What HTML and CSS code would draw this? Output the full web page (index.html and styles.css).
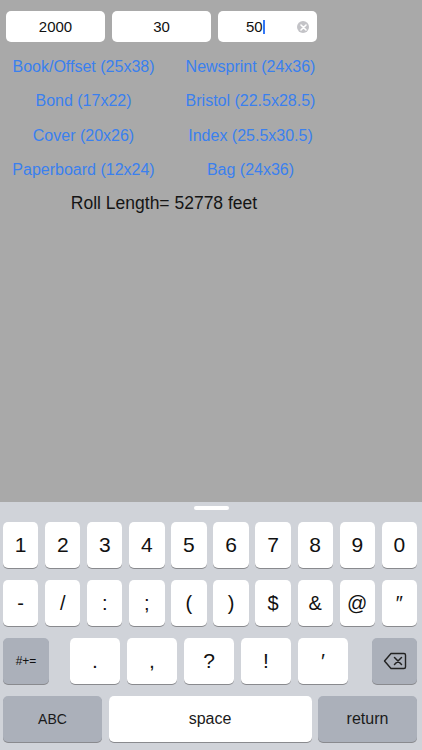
FILE: index.html
```html
<!DOCTYPE html>
<html lang="en">
<head>
    <meta charset="UTF-8">
    <meta name="viewport" content="width=device-width, initial-scale=1.0">
    <title>Roll Length</title>
    <link rel="stylesheet" href="styles.css">
</head>
<body>
    <div class="screen">
        <div class="inputs">
            <div class="field">2000</div>
            <div class="field">30</div>
            <div class="field active">
                <span class="value">50<span class="cursor"></span></span>
                <span class="clear">
                    <svg width="7" height="7" viewBox="0 0 7 7"><path d="M1 1L6 6M6 1L1 6" stroke="#fff" stroke-width="1.6" stroke-linecap="round"/></svg>
                </span>
            </div>
        </div>

        <div class="grades">
            <a class="grade">Book/Offset (25x38)</a>
            <a class="grade">Newsprint (24x36)</a>
            <a class="grade">Bond (17x22)</a>
            <a class="grade">Bristol (22.5x28.5)</a>
            <a class="grade">Cover (20x26)</a>
            <a class="grade">Index (25.5x30.5)</a>
            <a class="grade">Paperboard (12x24)</a>
            <a class="grade">Bag (24x36)</a>
        </div>

        <p class="result">Roll Length= 52778 feet</p>

        <div class="keyboard">
            <div class="handle"></div>
            <div class="row">
                <span class="key">1</span><span class="key">2</span><span class="key">3</span><span class="key">4</span><span class="key">5</span>
                <span class="key">6</span><span class="key">7</span><span class="key">8</span><span class="key">9</span><span class="key">0</span>
            </div>
            <div class="row sym">
                <span class="key">-</span><span class="key">/</span><span class="key">:</span><span class="key">;</span><span class="key">(</span>
                <span class="key">)</span><span class="key">$</span><span class="key">&amp;</span><span class="key">@</span><span class="key">″</span>
            </div>
            <div class="row third">
                <span class="key dark small">#+=</span>
                <div class="punct">
                    <span class="key">.</span><span class="key">,</span><span class="key">?</span><span class="key">!</span><span class="key">′</span>
                </div>
                <span class="key dark del">
                    <svg width="24" height="18" viewBox="0 0 24 18"><path d="M8 1.5H21a1.5 1.5 0 0 1 1.5 1.5V15a1.5 1.5 0 0 1-1.5 1.5H8L1.5 9Z" fill="none" stroke="#222" stroke-width="1.4" stroke-linejoin="round"/><path d="M11.5 5.5l7 7M18.5 5.5l-7 7" stroke="#222" stroke-width="1.5" stroke-linecap="round"/></svg>
                </span>
            </div>
            <div class="row bottom">
                <span class="key dark word abc">ABC</span>
                <span class="key word space">space</span>
                <span class="key dark word ret">return</span>
            </div>
        </div>
    </div>
</body>
</html>
```

FILE: styles.css
```css
body {
    margin: 0;
    font-family: "Liberation Sans", Arial, sans-serif;
    background-color: #a9a9a9;
}
.screen {
    height: 750px;
    display: flex;
    flex-direction: column;
}
.inputs {
    display: flex;
    gap: 7px;
    padding: 11px 0 0 6px;
}
.field {
    width: 99px;
    height: 31px;
    background-color: #fff;
    border-radius: 5px;
    font-size: 15px;
    color: #111;
    display: flex;
    align-items: center;
    justify-content: center;
    position: relative;
}
.field.active {
    justify-content: flex-start;
}
.field.active .value {
    margin-left: 28px;
    display: flex;
    align-items: center;
}
.cursor {
    width: 2px;
    height: 14px;
    background-color: #3478f6;
}
.clear {
    position: absolute;
    right: 8px;
    top: 10px;
    width: 12px;
    height: 12px;
    border-radius: 50%;
    background-color: #c3c3c7;
    display: flex;
    align-items: center;
    justify-content: center;
}
.grades {
    display: grid;
    grid-template-columns: 167px 167px;
    grid-auto-rows: 34.3px;
    margin-top: 8px;
}
.grade {
    color: #3a80ef;
    font-size: 16px;
    text-align: center;
    line-height: 34px;
}
.result {
    margin: 1px 0 0;
    width: 328px;
    text-align: center;
    font-size: 17.5px;
    color: #151515;
    line-height: 30px;
}
.keyboard {
    margin-top: auto;
    height: 248px;
    background-color: #d0d3d9;
    display: flex;
    flex-direction: column;
}
.handle {
    width: 35px;
    height: 4px;
    margin: 4px auto 0;
    background-color: #fff;
    border-radius: 2px;
}
.row {
    display: flex;
    gap: 6.8px;
    padding: 0 5px 0 3px;
    height: 46px;
    margin-top: 12px;
}
.key {
    flex: 1;
    background-color: #fff;
    border-radius: 5px;
    box-shadow: 0 1px 0 #898a8e;
    display: flex;
    align-items: center;
    justify-content: center;
    font-size: 21px;
    color: #111;
}
.sym .key {
    font-size: 20px;
}
.key.dark {
    background-color: #abb0ba;
}
.third {
    gap: 0;
}
.third .small {
    flex: none;
    width: 46px;
    font-size: 12px;
}
.third .del {
    flex: none;
    width: 45px;
    margin-left: auto;
}
.punct {
    display: flex;
    gap: 7px;
    margin-left: 21px;
}
.punct .key {
    flex: none;
    width: 50px;
}
.bottom {
    gap: 6.5px;
}
.key.word {
    font-size: 16px;
    color: #1a1a1a;
}
.abc, .ret {
    flex: none;
    width: 99px;
}
.key.abc {
    font-size: 14px;
}
```
